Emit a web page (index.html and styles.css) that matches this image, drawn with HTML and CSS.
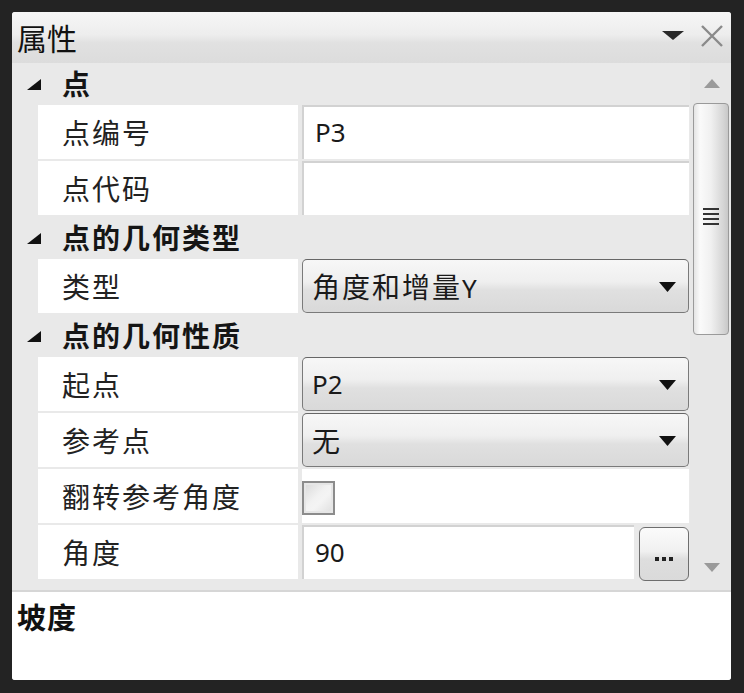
FILE: index.html
```html
<!DOCTYPE html>
<html lang="zh-CN">
<head>
<meta charset="utf-8">
<title>属性</title>
<link rel="stylesheet" href="styles.css">
</head>
<body>
<div class="panel">
  <div class="titlebar">
    <span class="title">属性</span>
    <div class="title-tools">
      <svg class="menu-arrow" width="22" height="9" viewBox="0 0 22 9"><polygon points="0,0 22,0 11,9" fill="#2a2a2a"/></svg>
      <svg class="close" width="24" height="22" viewBox="0 0 24 22"><path d="M2 1 L22 21 M22 1 L2 21" stroke="#8a8a8a" stroke-width="2.4" fill="none"/></svg>
    </div>
  </div>
  <div class="main">
    <div class="grid">
      <div class="section">
        <svg class="tri" width="14" height="11" viewBox="0 0 14 11"><polygon points="14,0 14,11 0,11" fill="#111"/></svg>
        <span>点</span>
      </div>
      <div class="row">
        <div class="label">点编号</div>
        <div class="value field"><span class="val">P3</span></div>
      </div>
      <div class="row">
        <div class="label">点代码</div>
        <div class="value field"></div>
      </div>
      <div class="section">
        <svg class="tri" width="14" height="11" viewBox="0 0 14 11"><polygon points="14,0 14,11 0,11" fill="#111"/></svg>
        <span>点的几何类型</span>
      </div>
      <div class="row">
        <div class="label">类型</div>
        <div class="value combo"><span class="cval"><span class="cjk">角度和增量</span>Y</span><svg class="drop" width="17" height="10" viewBox="0 0 17 10"><polygon points="0,0 17,0 8.5,10" fill="#111"/></svg></div>
      </div>
      <div class="section">
        <svg class="tri" width="14" height="11" viewBox="0 0 14 11"><polygon points="14,0 14,11 0,11" fill="#111"/></svg>
        <span>点的几何性质</span>
      </div>
      <div class="row">
        <div class="label">起点</div>
        <div class="value combo"><span class="cval">P2</span><svg class="drop" width="17" height="10" viewBox="0 0 17 10"><polygon points="0,0 17,0 8.5,10" fill="#111"/></svg></div>
      </div>
      <div class="row">
        <div class="label">参考点</div>
        <div class="value combo"><span class="cval"><span class="cjk">无</span></span><svg class="drop" width="17" height="10" viewBox="0 0 17 10"><polygon points="0,0 17,0 8.5,10" fill="#111"/></svg></div>
      </div>
      <div class="row">
        <div class="label">翻转参考角度</div>
        <div class="value plain"><span class="check"></span></div>
      </div>
      <div class="row">
        <div class="label">角度</div>
        <div class="value split">
          <div class="field grow"><span class="val">90</span></div>
          <div class="ellipsis"><span class="dots"><i></i><i></i><i></i></span></div>
        </div>
      </div>
    </div>
    <div class="scrollbar">
      <div class="sb-up"><svg width="16" height="9" viewBox="0 0 16 9"><polygon points="8,0 16,9 0,9" fill="#9a9a9a"/></svg></div>
      <div class="thumb">
        <div class="grip"><i></i><i></i><i></i><i></i></div>
      </div>
      <div class="sb-space"></div>
      <div class="sb-down"><svg width="16" height="9" viewBox="0 0 16 9"><polygon points="0,0 16,0 8,9" fill="#9a9a9a"/></svg></div>
    </div>
  </div>
  <div class="sep"></div>
  <div class="desc">
    <div class="desc-title">坡度</div>
  </div>
</div>
</body>
</html>
```

FILE: styles.css
```css
html, body {
  margin: 0;
  padding: 0;
}
body {
  width: 744px;
  height: 693px;
  background: #232323;
  font-family: "Noto Sans", "Noto Sans CJK SC", sans-serif;
  color: #1c1c1c;
  overflow: hidden;
}
.panel {
  margin: 12px 13px 0 12px;
  width: 719px;
  height: 668px;
  display: flex;
  flex-direction: column;
  background: #e9e9e9;
  border-radius: 3px;
  overflow: hidden;
}
.titlebar {
  height: 51px;
  flex: none;
  display: flex;
  align-items: center;
  justify-content: space-between;
  background: linear-gradient(#f6f6f6 0%, #ededed 45%, #e1e1e1 60%, #dcdcdc 100%);
  padding-left: 5px;
  padding-right: 7px;
  box-sizing: border-box;
}
.title {
  font-size: 30px;
  font-family: "Noto Sans CJK SC", sans-serif;
  color: #111;
  line-height: 1;
  margin-top: -2px;
}
.title-tools {
  display: flex;
  align-items: center;
  gap: 16px;
}
.menu-arrow { margin-top: -4px; }
.close { margin-top: -4px; }

.main {
  height: 527px;
  flex: none;
  display: flex;
}
.grid {
  width: 678px;
  flex: none;
  display: flex;
  flex-direction: column;
  gap: 2px;
}
.section {
  height: 40px;
  flex: none;
  display: flex;
  align-items: center;
  font-size: 28px;
  font-weight: bold;
  letter-spacing: 2px;
  font-family: "Noto Sans CJK SC", sans-serif;
  color: #151515;
}
.tri {
  margin-left: 15px;
  margin-right: 21px;
  margin-top: 2px;
}
.row {
  height: 54px;
  flex: none;
  display: flex;
  margin-left: 26px;
  gap: 4px;
}
.label {
  width: 260px;
  flex: none;
  background: #fff;
  display: flex;
  align-items: center;
  padding-left: 24px;
  box-sizing: border-box;
  font-size: 28px;
  letter-spacing: 2px;
  font-family: "Noto Sans CJK SC", sans-serif;
  color: #222;
}
.value {
  width: 387px;
  flex: none;
  box-sizing: border-box;
  display: flex;
  align-items: center;
}
.field {
  background: #fff;
  box-shadow: inset 2px 2px 0 #d2d2d2;
  padding-left: 13px;
  height: 100%;
  box-sizing: border-box;
  display: flex;
  align-items: center;
}
.val {
  font-size: 26px;
  color: #1a1a1a;
}
.combo {
  border: 1px solid #7a7a7a;
  border-top-color: #666;
  border-radius: 5px;
  background: linear-gradient(#f7f7f7 0%, #efefef 42%, #e0e0e0 58%, #d9d9d9 100%);
  justify-content: space-between;
  padding-left: 9px;
  padding-right: 12px;
  height: 54px;
}
.cval {
  font-size: 26px;
  color: #1a1a1a;
}
.cjk {
  font-family: "Noto Sans CJK SC", sans-serif;
  font-size: 28px;
  letter-spacing: 2px;
}
.drop { margin-top: 2px; }
.plain {
  background: #fff;
}
.check {
  width: 29px;
  height: 30px;
  border: 2px solid #8c8c8c;
  background: linear-gradient(135deg, #d8d8d8 0%, #f2f2f2 45%, #f4f4f4 60%, #dedede 100%);
  box-shadow: inset 0 0 0 2px #e6e6e6;
  margin-top: 3px;
}
.split {
  gap: 5px;
  align-items: stretch;
}
.grow {
  flex: 1;
}
.ellipsis {
  width: 48px;
  flex: none;
  border: 1px solid #6e6e6e;
  border-radius: 6px;
  background: linear-gradient(#fbfbfb 0%, #f0f0f0 45%, #dedede 60%, #dadada 100%);
  display: flex;
  justify-content: center;
  align-items: center;
  margin-top: 2px;
  margin-bottom: -2px;
}
.dots {
  display: flex;
  gap: 3px;
  margin-top: 10px;
}
.dots i {
  width: 4px;
  height: 4px;
  background: #222;
}

.scrollbar {
  width: 41px;
  flex: none;
  display: flex;
  flex-direction: column;
  align-items: center;
  background: #e7e7e7;
}
.sb-up {
  height: 40px;
  flex: none;
  display: flex;
  align-items: center;
  justify-content: center;
  padding-left: 2px;
}
.thumb {
  width: 36px;
  height: 232px;
  box-sizing: border-box;
  margin-left: 1px;
  border: 1px solid #9a9a9a;
  border-radius: 4px;
  background: linear-gradient(90deg, #e4e4e4 0%, #fafafa 18%, #f0f0f0 50%, #d6d6d6 85%, #c8c8c8 100%);
  display: flex;
  align-items: center;
  justify-content: center;
}
.grip {
  display: flex;
  flex-direction: column;
  gap: 3px;
  margin-top: -6px;
}
.grip i {
  width: 16px;
  height: 2px;
  background: #333;
}
.sb-space { flex: 1; }
.sb-down {
  height: 46px;
  flex: none;
  display: flex;
  align-items: center;
  justify-content: center;
  padding-left: 2px;
}

.sep {
  height: 2px;
  flex: none;
  background: #d6d6d6;
}
.desc {
  height: 86px;
  flex: none;
  background: #fff;
  border-bottom: 2px solid #cfcfcf;
  padding-left: 5px;
  padding-top: 7px;
  box-sizing: content-box;
}
.desc-title {
  font-size: 29px;
  letter-spacing: 1px;
  font-weight: bold;
  font-family: "Noto Sans CJK SC", sans-serif;
  color: #111;
  line-height: 1.2;
}
```
